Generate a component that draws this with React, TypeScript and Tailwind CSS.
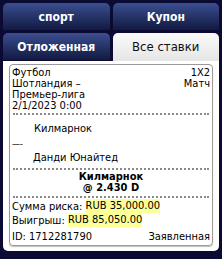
import React from "react";

const font = { fontFamily: '"DejaVu Sans Condensed", "DejaVu Sans", Tahoma, sans-serif' };

function Dots() {
  return <div className="mx-[1px] border-t-2 border-dotted border-[#8a8a8a]" />;
}

export default function App() {
  return (
    <div
      className="w-[222px] h-[259px] bg-[#0a0a32] pt-[3px] px-[3px] flex flex-col"
      style={font}
    >
      <div className="grid grid-cols-2 gap-x-[3px] gap-y-[3px]">
        <div className="h-[27px] rounded-t-[5px] bg-gradient-to-b from-[#3b4f90] to-[#121a42] flex items-center justify-center text-white font-bold text-[12px]">
          спорт
        </div>
        <div className="h-[27px] rounded-t-[5px] bg-gradient-to-b from-[#3b4f90] to-[#121a42] flex items-center justify-center text-white font-bold text-[12px]">
          Купон
        </div>
        <div className="h-[27px] rounded-t-[5px] bg-gradient-to-b from-[#3b4f90] to-[#121a42] flex items-center justify-center text-white font-bold text-[12px]">
          Отложенная
        </div>
        <div className="h-[28px] rounded-t-[5px] bg-gradient-to-b from-[#fafafa] to-[#e6e6e6] flex items-center justify-center text-[#111] text-[13px]">
          Все ставки
        </div>
      </div>
      <div className="bg-white rounded-b-[5px] px-[6px] pt-[3px] pb-[5px] h-[190px]">
        <div className="h-full border border-[#9a9a9a] rounded-[4px] shadow-[0_1px_1px_rgba(0,0,0,0.25)] px-[2px] pt-[2px] text-[11px] leading-[11px] text-black">
          <div className="flex justify-between">
            <div>
              <div>Футбол</div>
              <div>Шотландия –</div>
              <div>Премьер-лига</div>
              <div>2/1/2023 0:00</div>
            </div>
            <div className="text-right">
              <div>1X2</div>
              <div>Матч</div>
            </div>
          </div>
          <div className="mt-[2px]">
            <Dots />
          </div>
          <div className="pt-[8px] pb-[5px]">
            <div className="pl-[22px] h-[13px]">Килмарнок</div>
            <div className="h-[16px] flex items-center text-[9px]">—-</div>
            <div className="pl-[21px] h-[11px]">Данди Юнайтед</div>
          </div>
          <Dots />
          <div className="text-center font-bold pt-[2px] pb-[3px]">
            <div className="h-[10px] leading-[10px]">Килмарнок</div>
            <div className="h-[11px]">@ 2.430 D</div>
          </div>
          <Dots />
          <div className="pt-[1px]">
            <div className="h-[14px] flex items-center">
              Сумма риска:&nbsp;<span className="bg-[#ffff99] leading-[14px]">RUB 35,000.00</span>
            </div>
            <div className="h-[14px] flex items-center">
              Выигрыш:&nbsp;<span className="bg-[#ffff99] leading-[14px]">RUB 85,050.00</span>
            </div>
            <div className="h-[15px] flex items-end justify-between">
              <span>ID: 1712281790</span>
              <span>Заявленная</span>
            </div>
          </div>
        </div>
      </div>
    </div>
  );
}
